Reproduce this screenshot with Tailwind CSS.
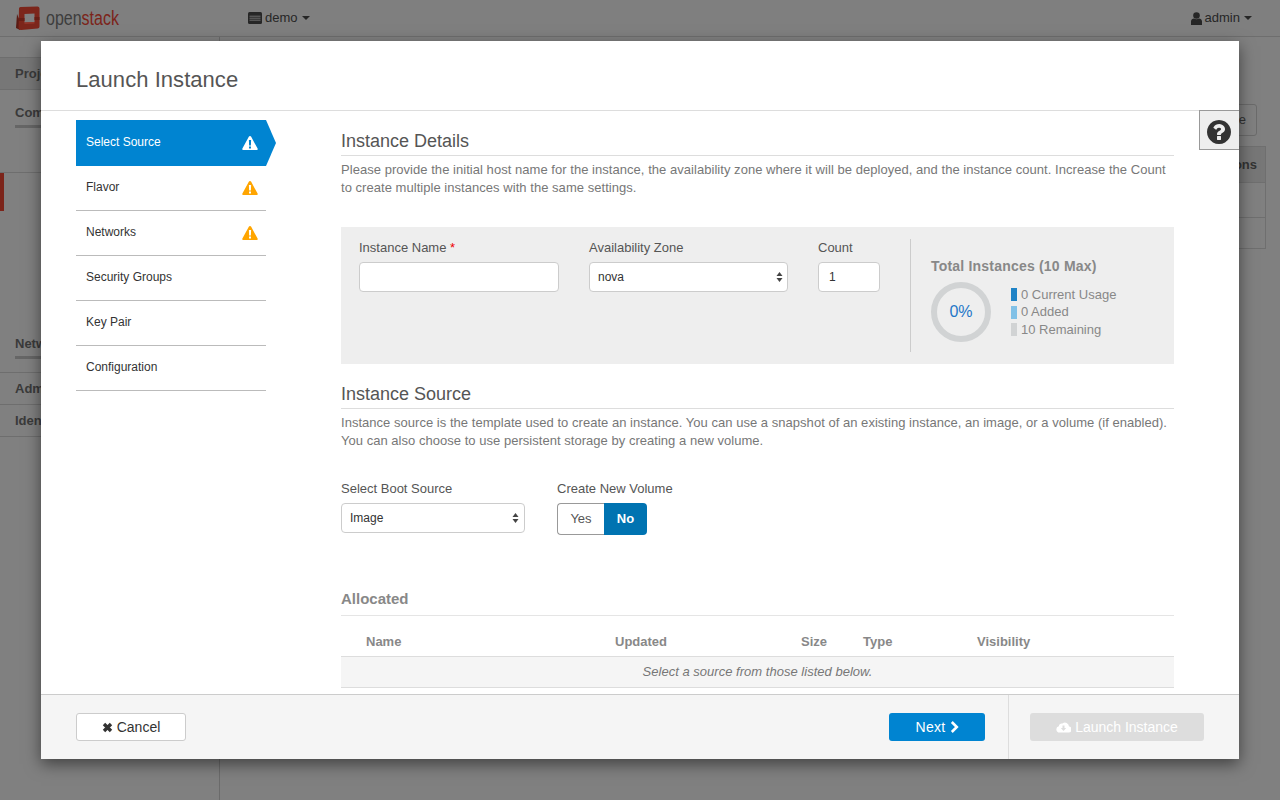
<!DOCTYPE html>
<html lang="en">

<head>
    <meta charset="UTF-8">
    <title>Launch Instance</title>
    <script src="https://cdn.jsdelivr.net/npm/@tailwindcss/browser@4"></script>
</head>

<body class="bg-[#808080] font-['Liberation_Sans',Arial,sans-serif] text-[13px] leading-[18px] text-[#333]">
    <div class="relative h-[800px] w-[1280px] overflow-hidden">

        <!-- page behind the backdrop -->
        <header class="flex h-[37px] items-center border-b border-[#6e6e6e] bg-[#7f7f7f] text-[#262626]">
            <div class="flex w-[248px] items-center pl-[16px]">
                <svg class="h-[25px] w-[24px]" viewBox="0 0 24 25">
                    <path fill="#5a1b14" d="M1 8 L0 22 L4 24 L6 20Z"/>
                    <path fill="#7c261b" d="M3 2.500 Q3 1 4.500 1 L21.500 0.500 Q23.500 0.500 23.500 2.500 L23.500 20.500 Q23.500 22.500 21.500 22.500 L5 24 Q2.500 24 2.500 22Z"/>
                    <path fill="#808080" d="M8.500 8 L18.500 7.500 L18.500 16 L8.500 16.500 Z"/>
                    <path fill="#671e15" d="M3 12h5.500v3H3zM18.500 11h5v3h-5z"/>
                    <path fill="#94362a" d="M8.500 16.500 L18.500 16 L18.500 17.500 L8.500 18Z"/>
                </svg>
                <span class="ml-[6px] inline-block origin-left scale-x-[0.8] whitespace-nowrap text-[20px]"><span class="text-[#3d3d3d]">open</span><span class="text-[#7c241a]">stack</span></span>
            </div>
            <div class="flex items-center gap-[3px]">
                <svg class="h-[12px] w-[14px]" viewBox="0 0 14 12"><rect width="14" height="12" rx="1.500" fill="#262626"/><path d="M1.500 4.200h11M1.500 6.200h11M1.500 8.200h11" stroke="#7f7f7f" stroke-width="0.800"/></svg>
                <span>demo</span>
                <span class="ml-[1px] h-0 w-0 border-x-[4px] border-t-[4px] border-x-transparent border-t-[#262626]"></span>
            </div>
            <div class="ml-auto flex items-center gap-[3px] pr-[28px]">
                <svg class="h-[13px] w-[11px]" viewBox="0 0 11 13" fill="#262626"><circle cx="5.500" cy="3.500" r="3.300"/><path d="M0 13V9.500C0 7.500 1.500 6.500 3 6.500c1.500 1 3.500 1 5 0 1.500 0 3 1 3 3V13z"/></svg>
                <span>admin</span>
                <span class="ml-[1px] h-0 w-0 border-x-[4px] border-t-[4px] border-x-transparent border-t-[#262626]"></span>
            </div>
        </header>

        <div class="flex h-[763px]">
            <aside class="w-[220px] border-r border-[#6b6b6b] font-bold text-[#3a3a3a]">
                <div class="mt-[20px] flex h-[33px] items-center border-y border-[#6e6e6e] bg-[#777] pl-[15px]">Project</div>
                <div class="mt-[14px] pl-[15px]"><span class="inline-block border-b-[3px] border-[#666] pb-[3px] pr-[60px]">Compute</span></div>
                <div class="relative mt-[44px] h-[39px] border-t border-[#6e6e6e]">
                    <div class="h-full w-[4px] bg-[#7c241a]"></div>
                </div>
                <div class="mt-[124px] pl-[15px]"><span class="inline-block border-b-[3px] border-[#666] pb-[3px] pr-[60px]">Network</span></div>
                <div class="mt-[13px] flex h-[33px] items-center border-y border-[#6e6e6e] pl-[15px]">Admin</div>
                <div class="flex h-[32px] items-center border-b border-[#6e6e6e] pl-[15px]">Identity</div>
            </aside>
            <main class="flex-1 pr-[14px]">
                <div class="ml-auto mr-[9px] mt-[67px] flex h-[32px] w-[120px] items-center justify-end rounded-[3px] border border-[#6b6b6b] pr-[10px]">Create</div>
                <div class="ml-auto mt-[10px] w-[300px] border border-[#6f6f6f]">
                    <div class="flex h-[36px] items-center justify-end border-b border-[#6f6f6f] bg-[#777] pr-[8px] font-bold text-[#333]">Actions</div>
                    <div class="h-[35px] border-b border-[#6f6f6f]"></div>
                    <div class="h-[30px]"></div>
                </div>
            </main>
        </div>

        <!-- modal -->
        <div class="absolute left-[41px] top-[41px] flex h-[718px] w-[1198px] flex-col bg-white shadow-[0_5px_15px_rgba(0,0,0,0.5)]">
            <div class="flex h-[70px] items-center border-b border-[#ddd] pl-[35px] pt-[8px]">
                <h4 class="text-[22px] leading-[24px] tracking-[0.05px] text-[#555]">Launch Instance</h4>
            </div>

            <button class="absolute right-0 top-[69px] flex h-[40px] w-[40px] items-center justify-center border border-r-0 border-[#999] bg-[#eee] pr-[1px] pt-[4px]">
                <svg class="h-[28px] w-[28px]" viewBox="0 0 1792 1792" fill="#333"><path d="M1024 1376v-192q0-14-9-23t-23-9h-192q-14 0-23 9t-9 23v192q0 14 9 23t23 9h192q14 0 23-9t9-23zm256-672q0-88-55.500-163t-138.500-116-170-41q-243 0-371 213-15 24 8 42l132 100q7 6 19 6 16 0 25-12 53-68 86-92 34-24 86-24 48 0 85.500 26t37.500 59q0 38-20 61t-68 45q-63 28-115.500 86.500t-52.500 125.500v36q0 14 9 23t23 9h192q14 0 23-9t9-23q0-19 21.500-49.500t54.500-49.500q32-18 49-28.500t46-35 44.500-48 28-60.500 12.500-81zm384 192q0 209-103 385.500t-279.500 279.500-385.500 103-385.500-103-279.500-279.500-103-385.500 103-385.500 279.500-279.500 385.500-103 385.500 103 279.500 279.500 103 385.500z"/></svg>
            </button>

            <div class="flex min-h-0 flex-1 overflow-hidden">
                <!-- wizard steps -->
                <nav class="w-[300px] shrink-0 pl-[35px] pt-[9px] text-[12px]">
                    <div class="flex h-[46px] w-[200px] items-center justify-between bg-[#0084d1] pl-[10px] pr-[18px] text-white [clip-path:polygon(0_0,190px_0,100%_50%,190px_100%,0_100%)]">
                        <span class="-mt-[2px]">Select Source</span>
                        <svg class="h-[16px] w-[16px]" viewBox="0 0 16 16"><path fill="#fff" fill-rule="evenodd" d="M8 1 Q8.800 1 9.200 1.800 L15.600 13.600 Q16.200 15 14.800 15 H1.200 Q-0.200 15 0.400 13.600 L6.800 1.800 Q7.200 1 8 1Z M6.900 5 L7.100 10.500 H8.900 L9.100 5Z M7 11.500 V13.500 H9 V11.500Z"/></svg>
                    </div>
                    <div class="flex h-[45px] w-[190px] items-center justify-between border-b border-[#bbb] pl-[10px] pr-[8px]">
                        <span class="-mt-[2px]">Flavor</span>
                        <svg class="h-[16px] w-[16px]" viewBox="0 0 16 16"><path fill="#ffa500" fill-rule="evenodd" d="M8 1 Q8.800 1 9.200 1.800 L15.600 13.600 Q16.200 15 14.800 15 H1.200 Q-0.200 15 0.400 13.600 L6.800 1.800 Q7.200 1 8 1Z M6.900 5 L7.100 10.500 H8.900 L9.100 5Z M7 11.500 V13.500 H9 V11.500Z"/></svg>
                    </div>
                    <div class="flex h-[45px] w-[190px] items-center justify-between border-b border-[#bbb] pl-[10px] pr-[8px]">
                        <span class="-mt-[2px]">Networks</span>
                        <svg class="h-[16px] w-[16px]" viewBox="0 0 16 16"><path fill="#ffa500" fill-rule="evenodd" d="M8 1 Q8.800 1 9.200 1.800 L15.600 13.600 Q16.200 15 14.800 15 H1.200 Q-0.200 15 0.400 13.600 L6.800 1.800 Q7.200 1 8 1Z M6.900 5 L7.100 10.500 H8.900 L9.100 5Z M7 11.500 V13.500 H9 V11.500Z"/></svg>
                    </div>
                    <div class="flex h-[45px] w-[190px] items-center border-b border-[#bbb] pb-[2px] pl-[10px]">Security Groups</div>
                    <div class="flex h-[45px] w-[190px] items-center border-b border-[#bbb] pb-[2px] pl-[10px]">Key Pair</div>
                    <div class="flex h-[45px] w-[190px] items-center border-b border-[#bbb] pb-[2px] pl-[10px]">Configuration</div>
                </nav>

                <!-- step content -->
                <section class="w-[833px] shrink-0">
                    <h3 class="h-[45px] border-b border-[#ddd] pt-[19px] text-[18px] leading-[22px] text-[#555]">Instance Details</h3>
                    <p class="mt-[5px] tracking-[0.04px] text-[#777]">Please provide the initial host name for the instance, the availability zone where it will be deployed, and the instance count. Increase the Count to create multiple instances with the same settings.</p>

                    <div class="mt-[30px] flex h-[137px] bg-[#eee] pl-[18px] pt-[12px]">
                        <div class="w-[200px]">
                            <label class="block text-[#555]">Instance Name <span class="text-[#e00]">*</span></label>
                            <input type="text" class="mt-[5px] h-[30px] w-full rounded-[4px] border border-[#ccc] bg-white">
                        </div>
                        <div class="ml-[30px] w-[199px]">
                            <label class="block text-[#555]">Availability Zone</label>
                            <div class="relative mt-[5px] flex h-[30px] items-center rounded-[4px] border border-[#ccc] bg-white pl-[8px] text-[12px] text-[#333]">
                                nova
                                <svg class="absolute right-[4px] h-[10px] w-[7px]" viewBox="0 0 7 10" fill="#444"><path d="M3.500 0 L6.500 4 H0.500Z M3.500 10 L0.500 6 H6.500Z"/></svg>
                            </div>
                        </div>
                        <div class="ml-[30px] w-[62px]">
                            <label class="block text-[#555]">Count</label>
                            <div class="mt-[5px] flex h-[30px] items-center rounded-[4px] border border-[#ccc] bg-white pl-[10px] text-[12px]">1</div>
                        </div>
                        <div class="ml-[30px] h-[113px] border-l border-[#ccc] pl-[20px] pt-[18px]">
                            <div class="text-[14px] font-bold tracking-[0.2px] text-[#888]">Total Instances (10 Max)</div>
                            <div class="mt-[7px] flex">
                                <div class="flex h-[60px] w-[60px] items-center justify-center rounded-full border-[6px] border-[#d1d3d4] text-[16px] text-[#1f77c8]">0%</div>
                                <div class="ml-[20px] pt-[4px] text-[#888]">
                                    <div class="flex h-[17.500px] items-center gap-[4px]"><span class="h-[13px] w-[6px] bg-[#1f83c6]"></span>0 Current Usage</div>
                                    <div class="flex h-[17.500px] items-center gap-[4px]"><span class="h-[13px] w-[6px] bg-[#81c1e7]"></span>0 Added</div>
                                    <div class="flex h-[17.500px] items-center gap-[4px]"><span class="h-[13px] w-[6px] bg-[#d1d3d4]"></span>10 Remaining</div>
                                </div>
                            </div>
                        </div>
                    </div>

                    <h3 class="h-[45px] border-b border-[#ddd] pt-[19px] text-[18px] leading-[22px] text-[#555]">Instance Source</h3>
                    <p class="mt-[5px] tracking-[0.03px] text-[#777]">Instance source is the template used to create an instance. You can use a snapshot of an existing instance, an image, or a volume (if enabled). You can also choose to use persistent storage by creating a new volume.</p>

                    <div class="mt-[30px] flex">
                        <div class="w-[184px]">
                            <label class="block text-[#555]">Select Boot Source</label>
                            <div class="relative mt-[5px] flex h-[30px] items-center rounded-[4px] border border-[#ccc] bg-white pl-[8px] text-[12px]">
                                Image
                                <svg class="absolute right-[5px] h-[10px] w-[7px]" viewBox="0 0 7 10" fill="#444"><path d="M3.500 0 L6.500 4 H0.500Z M3.500 10 L0.500 6 H6.500Z"/></svg>
                            </div>
                        </div>
                        <div class="ml-[32px]">
                            <label class="block text-[#555]">Create New Volume</label>
                            <div class="mt-[5px] flex h-[32px] w-[90px]">
                                <span class="flex w-[47px] items-center justify-center rounded-l-[4px] border border-r-0 border-[#999] bg-white text-[#555]">Yes</span>
                                <span class="flex w-[43px] items-center justify-center rounded-r-[4px] bg-[#0073b1] font-bold text-white">No</span>
                            </div>
                        </div>
                    </div>

                    <h4 class="mt-[52px] h-[29px] border-b border-[#e5e5e5] pt-[1px] text-[15px] font-bold leading-[22px] text-[#888]">Allocated</h4>
                    <div class="grid h-[41px] grid-cols-[249px_186px_62px_114px_1fr] border-b border-[#ddd] pl-[25px] pt-[17px] font-bold text-[#888]">
                        <span>Name</span><span>Updated</span><span>Size</span><span>Type</span><span>Visibility</span>
                    </div>
                    <div class="flex h-[31px] items-center justify-center border-b border-[#ddd] bg-[#f5f5f5] italic tracking-[0.02px] text-[#777]">Select a source from those listed below.</div>
                </section>
            </div>

            <!-- footer -->
            <div class="flex h-[65px] shrink-0 items-center border-t border-[#ccc] bg-[#f5f5f5] pl-[35px]">
                <button class="flex h-[28px] w-[110px] items-center justify-center gap-[4px] rounded-[3px] border border-[#ccc] bg-white text-[14px] text-[#333]">
                    <svg class="h-[11px] w-[11px]" viewBox="0 0 11 11"><path d="M2 2 L9 9 M9 2 L2 9" stroke="#333" stroke-width="3.400"/></svg>
                    Cancel
                </button>
                <button class="ml-auto flex h-[28px] w-[96px] items-center justify-center gap-[4px] rounded-[3px] bg-[#0084d1] text-[14px] tracking-[0.3px] text-white">
                    Next
                    <svg class="h-[12px] w-[9px]" viewBox="0 0 9 12"><path d="M1.800 1 L6.800 6 L1.800 11" fill="none" stroke="#fff" stroke-width="2.600"/></svg>
                </button>
                <div class="ml-[23px] flex h-full w-[231px] items-center border-l border-[#ddd] pl-[21px]">
                    <button class="flex h-[28px] w-[174px] items-center justify-center gap-[4px] rounded-[3px] bg-[#ddd] text-[14px] text-white">
                        <svg class="h-[12px] w-[15px]" viewBox="0 0 15 12"><path fill="#fff" fill-rule="evenodd" d="M3.500 11.500 A3.200 3.200 0 0 1 2.800 5.200 A3 3 0 0 1 6.500 2.500 A4 4 0 0 1 13 5.500 A3 3 0 0 1 12 11.500Z M6.500 4.500 V7 H4.800 L7.500 10 L10.200 7 H8.500 V4.500Z"/></svg>
                        Launch Instance
                    </button>
                </div>
            </div>
        </div>
    </div>
</body>

</html>
